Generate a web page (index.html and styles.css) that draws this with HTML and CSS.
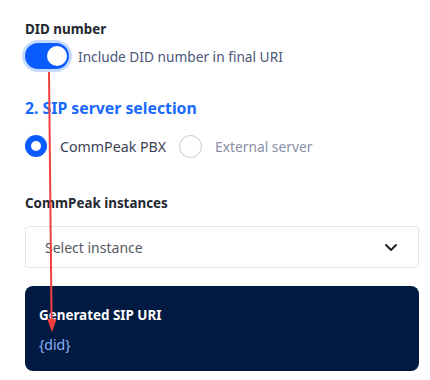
FILE: index.html
```html
<!DOCTYPE html>
<html lang="en">
<head>
    <meta charset="utf-8">
    <title>SIP URI settings</title>
    <link rel="stylesheet" href="styles.css">
</head>
<body>
    <div class="panel">
        <div class="field-label first">DID number</div>
        <label class="switch-row">
            <span class="switch"><span class="knob"></span></span>
            <span class="switch-text">Include DID number in final URI</span>
        </label>

        <h2 class="section-title">2. SIP server selection</h2>
        <div class="radio-row">
            <span class="radio checked"></span>
            <span class="radio-text">CommPeak PBX</span>
            <span class="radio"></span>
            <span class="radio-text muted">External server</span>
        </div>

        <div class="field-label instances">CommPeak instances</div>
        <div class="select">
            <span>Select instance</span>
            <svg width="14" height="9" viewBox="0 0 14 9"><path d="M2 2l5 5 5-5" fill="none" stroke="#1f2430" stroke-width="2" stroke-linecap="round" stroke-linejoin="round"/></svg>
        </div>

        <div class="uri-card">
            <div class="uri-title">Generated SIP URI</div>
            <div class="uri-value">{did}</div>
        </div>
    </div>

    <!-- annotation arrow -->
    <svg class="arrow" width="430" height="380" viewBox="0 0 430 380">
        <line x1="49" y1="72" x2="51.6" y2="322" stroke="#f2403f" stroke-width="2"/>
        <polygon points="47.2,319 56.6,319 52,332" fill="#f2403f"/>
    </svg>
</body>
</html>
```

FILE: styles.css
```css
body {
    margin: 0;
    background: #fff;
    font-family: "Source Sans Pro", "Noto Sans", sans-serif;
    color: #22262e;
}

.panel {
    display: flex;
    flex-direction: column;
    padding: 0 11px 0 25px;
}

.field-label {
    font-size: 13.4px;
    font-weight: 700;
    line-height: 20px;
    color: #23272f;
}

.field-label.first {
    margin-top: 19px;
}

.switch-row {
    display: flex;
    align-items: center;
    gap: 9px;
    height: 32px;
    margin-top: 1px;
}

.switch {
    position: relative;
    width: 44px;
    height: 26px;
    border-radius: 13px;
    background: #0a5cff;
    box-shadow: 0 0 0 3px #c6d9ff;
}

.knob {
    position: absolute;
    right: 2px;
    top: 3px;
    width: 20px;
    height: 20px;
    border-radius: 50%;
    background: #fff;
}

.switch-text {
    font-size: 13.7px;
    color: #4a5577;
}

.section-title {
    margin: 24px 0 0;
    font-size: 15.8px;
    font-weight: 700;
    line-height: 24px;
    color: #1769ff;
}

.radio-row {
    display: flex;
    align-items: center;
    height: 22px;
    margin-top: 15px;
}

.radio {
    box-sizing: border-box;
    width: 23px;
    height: 23px;
    border-radius: 50%;
    border: 1px solid #c9c9c9;
    margin-right: 13px;
}

.radio.checked {
    width: 22px;
    height: 22px;
    border: 6px solid #0a5cff;
}

.radio-text {
    font-size: 14.2px;
    color: #3b4256;
    margin-right: 13px;
}

.radio-text.muted {
    font-size: 13.8px;
    color: #8891a6;
}

.field-label.instances {
    margin-top: 36px;
}

.select {
    box-sizing: border-box;
    display: flex;
    align-items: center;
    justify-content: space-between;
    height: 42px;
    margin-top: 13px;
    padding: 0 20px 0 19px;
    border: 1px solid #e4e4e4;
    border-radius: 4px;
    font-size: 14px;
    color: #555a63;
}

.uri-card {
    box-sizing: border-box;
    height: 85px;
    margin-top: 18px;
    padding: 19px 14px 0;
    border-radius: 8px;
    background: #011a42;
}

.uri-title {
    font-size: 13.4px;
    font-weight: 700;
    line-height: 20px;
    color: #fff;
}

.uri-value {
    margin-top: 10px;
    font-size: 14px;
    line-height: 20px;
    color: #8ab4f8;
}

.arrow {
    position: absolute;
    left: 0;
    top: 0;
    pointer-events: none;
}
```
